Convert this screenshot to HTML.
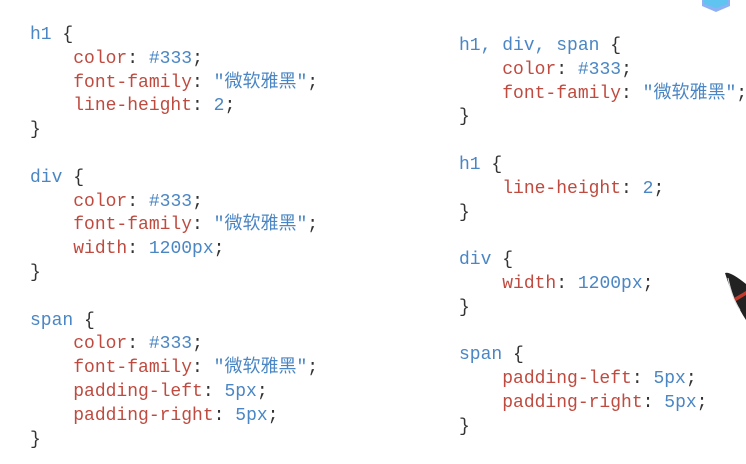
<!DOCTYPE html>
<html><head><meta charset="utf-8"><style>
body{margin:0;width:746px;height:464px;background:#fff;overflow:hidden;position:relative}
pre{position:absolute;margin:0;font-family:"Liberation Mono","Noto Sans CJK SC",monospace;font-size:18px;line-height:23.8px;color:#333}
.s{color:#4a86c4}.p{color:#bf4a3f}.v{color:#4a86c4}
</style></head><body>
<pre style="left:30px;top:24px"><span class="s">h1</span> {
    <span class="p">color</span>: <span class="v">#333</span>;
    <span class="p">font-family</span>: <span class="v">"微软雅黑"</span>;
    <span class="p">line-height</span>: <span class="v">2</span>;
}

<span class="s">div</span> {
    <span class="p">color</span>: <span class="v">#333</span>;
    <span class="p">font-family</span>: <span class="v">"微软雅黑"</span>;
    <span class="p">width</span>: <span class="v">1200px</span>;
}

<span class="s">span</span> {
    <span class="p">color</span>: <span class="v">#333</span>;
    <span class="p">font-family</span>: <span class="v">"微软雅黑"</span>;
    <span class="p">padding-left</span>: <span class="v">5px</span>;
    <span class="p">padding-right</span>: <span class="v">5px</span>;
}</pre>
<pre style="left:459px;top:35px"><span class="s">h1, div, span</span> {
    <span class="p">color</span>: <span class="v">#333</span>;
    <span class="p">font-family</span>: <span class="v">"微软雅黑"</span>;
}

<span class="s">h1</span> {
    <span class="p">line-height</span>: <span class="v">2</span>;
}

<span class="s">div</span> {
    <span class="p">width</span>: <span class="v">1200px</span>;
}

<span class="s">span</span> {
    <span class="p">padding-left</span>: <span class="v">5px</span>;
    <span class="p">padding-right</span>: <span class="v">5px</span>;
}</pre>
<svg style="position:absolute;left:700px;top:0" width="46" height="14"><polygon points="2,0 30,0 30,6 16,12 2,6" fill="#8fb0f5"/><polygon points="4,0 28,0 28,4 16,8 4,4" fill="#5fc4f0"/></svg>
<svg style="position:absolute;left:720px;top:270px" width="26" height="50"><path d="M5,3 Q10,1 26,14 L26,50 Q14,32 5,3Z" fill="#222"/><path d="M8,8 Q12,28 20,40" stroke="#ddd" stroke-width="1" fill="none"/><path d="M14,28 L26,21 L26,25 L16,31Z" fill="#c0392b"/></svg>
</body></html>
